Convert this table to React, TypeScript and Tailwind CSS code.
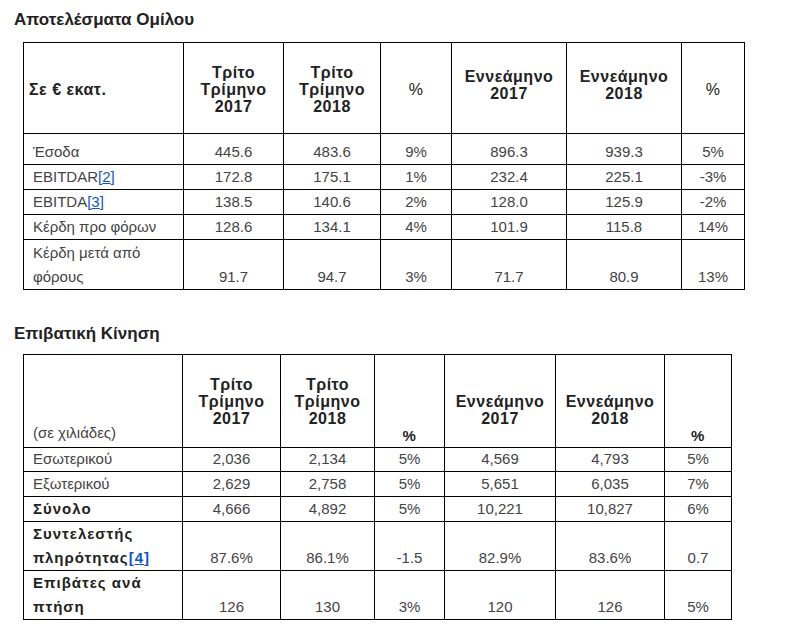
const font = { fontFamily: '"Liberation Sans", Arial, sans-serif' };

const Ref = ({ n, bold }: { n: number; bold?: boolean }) => (
  <a href="#" className={`text-[#1155cc] underline ${bold ? "font-bold" : ""}`}>
    [{n}]
  </a>
);

type Row = { label: React.ReactNode; vals: string[]; h: string; bold?: boolean; two?: boolean };

const results: Row[] = [
  { label: "Έσοδα", vals: ["445.6", "483.6", "9%", "896.3", "939.3", "5%"], h: "h-[31px]" },
  { label: <>EBITDAR<Ref n={2} /></>, vals: ["172.8", "175.1", "1%", "232.4", "225.1", "-3%"], h: "h-[25px]" },
  { label: <>EBITDA<Ref n={3} /></>, vals: ["138.5", "140.6", "2%", "128.0", "125.9", "-2%"], h: "h-[25px]" },
  { label: "Κέρδη προ φόρων", vals: ["128.6", "134.1", "4%", "101.9", "115.8", "14%"], h: "h-[25px]" },
  { label: <>Κέρδη μετά από<br />φόρους</>, vals: ["91.7", "94.7", "3%", "71.7", "80.9", "13%"], h: "h-[50px]", two: true },
];

const traffic: Row[] = [
  { label: "Εσωτερικού", vals: ["2,036", "2,134", "5%", "4,569", "4,793", "5%"], h: "h-[24px]" },
  { label: "Εξωτερικού", vals: ["2,629", "2,758", "5%", "5,651", "6,035", "7%"], h: "h-[25px]" },
  { label: "Σύνολο", vals: ["4,666", "4,892", "5%", "10,221", "10,827", "6%"], h: "h-[25px]", bold: true },
  { label: <>Συντελεστής<br />πληρότητας<Ref n={4} bold /></>, vals: ["87.6%", "86.1%", "-1.5", "82.9%", "83.6%", "0.7"], h: "h-[49px]", bold: true, two: true },
  { label: <>Επιβάτες ανά<br />πτήση</>, vals: ["126", "130", "3%", "120", "126", "5%"], h: "h-[49px]", bold: true, two: true },
];

const cell = "border border-black align-bottom";

const Body = ({ rows }: { rows: Row[] }) => (
  <tbody>
    {rows.map((r, i) => {
      const lead = r.two ? "leading-[24px] pb-0" : "leading-[20px] pb-[2px]";
      return (
        <tr key={i}>
          <td className={`${cell} ${r.h} ${lead} pl-[9px] ${r.bold ? "font-bold text-[#222] tracking-[1px]" : "text-[#444]"}`}>
            {r.label}
          </td>
          {r.vals.map((v, j) => (
            <td key={j} className={`${cell} ${r.h} ${lead} text-center text-[#444]`}>
              {v}
            </td>
          ))}
        </tr>
      );
    })}
  </tbody>
);

export default function App() {
  return (
    <div className="bg-white min-h-[644px] w-[806px] text-[15px]" style={font}>
      <h2 className="pl-[14px] pt-[10px] text-[17px] font-bold text-[#222] leading-[20px]">Αποτελέσματα Ομίλου</h2>
      <table className="ml-[23px] mt-[12px] border-collapse table-fixed w-[721px]">
        <colgroup>
          <col className="w-[160px]" />
          <col className="w-[100px]" />
          <col className="w-[97px]" />
          <col className="w-[71px]" />
          <col className="w-[115px]" />
          <col className="w-[115px]" />
          <col className="w-[63px]" />
        </colgroup>
        <thead>
          <tr className="font-bold text-[#222] leading-[17px] text-[16px] tracking-[0.5px]">
            <th className="border border-black h-[91px] align-middle text-left pl-[5px] pt-[2px]">Σε € εκατ.</th>
            <th className="border border-black align-middle pt-[2px]">Τρίτο<br />Τρίμηνο<br />2017</th>
            <th className="border border-black align-middle pt-[2px]">Τρίτο<br />Τρίμηνο<br />2018</th>
            <th className="border border-black align-middle pt-[2px] font-normal">%</th>
            <th className="border border-black align-middle pb-[6px]">Εννεάμηνο<br />2017</th>
            <th className="border border-black align-middle pb-[6px]">Εννεάμηνο<br />2018</th>
            <th className="border border-black align-middle pt-[2px] font-normal">%</th>
          </tr>
        </thead>
        <Body rows={results} />
      </table>

      <h2 className="pl-[14px] pt-[34px] text-[17px] font-bold text-[#222] leading-[20px]">Επιβατική Κίνηση</h2>
      <table className="ml-[23px] mt-[10px] border-collapse table-fixed w-[708px]">
        <colgroup>
          <col className="w-[159px]" />
          <col className="w-[98px]" />
          <col className="w-[94px]" />
          <col className="w-[70px]" />
          <col className="w-[111px]" />
          <col className="w-[109px]" />
          <col className="w-[67px]" />
        </colgroup>
        <thead>
          <tr className="text-[#222] leading-[17px] text-[16px] tracking-[0.5px]">
            <th className="border border-black h-[93px] align-bottom text-left pl-[9px] pb-[2px] font-normal text-[15px] text-[#444] leading-[24px] tracking-normal">(σε χιλιάδες)</th>
            <th className="border border-black align-bottom font-bold pb-[20px]">Τρίτο<br />Τρίμηνο<br />2017</th>
            <th className="border border-black align-bottom font-bold pb-[20px]">Τρίτο<br />Τρίμηνο<br />2018</th>
            <th className="border border-black align-bottom font-bold pb-[3px] text-[15px]">%</th>
            <th className="border border-black align-bottom font-bold pb-[20px]">Εννεάμηνο<br />2017</th>
            <th className="border border-black align-bottom font-bold pb-[20px]">Εννεάμηνο<br />2018</th>
            <th className="border border-black align-bottom font-bold pb-[3px] text-[15px]">%</th>
          </tr>
        </thead>
        <Body rows={traffic} />
      </table>
    </div>
  );
}
